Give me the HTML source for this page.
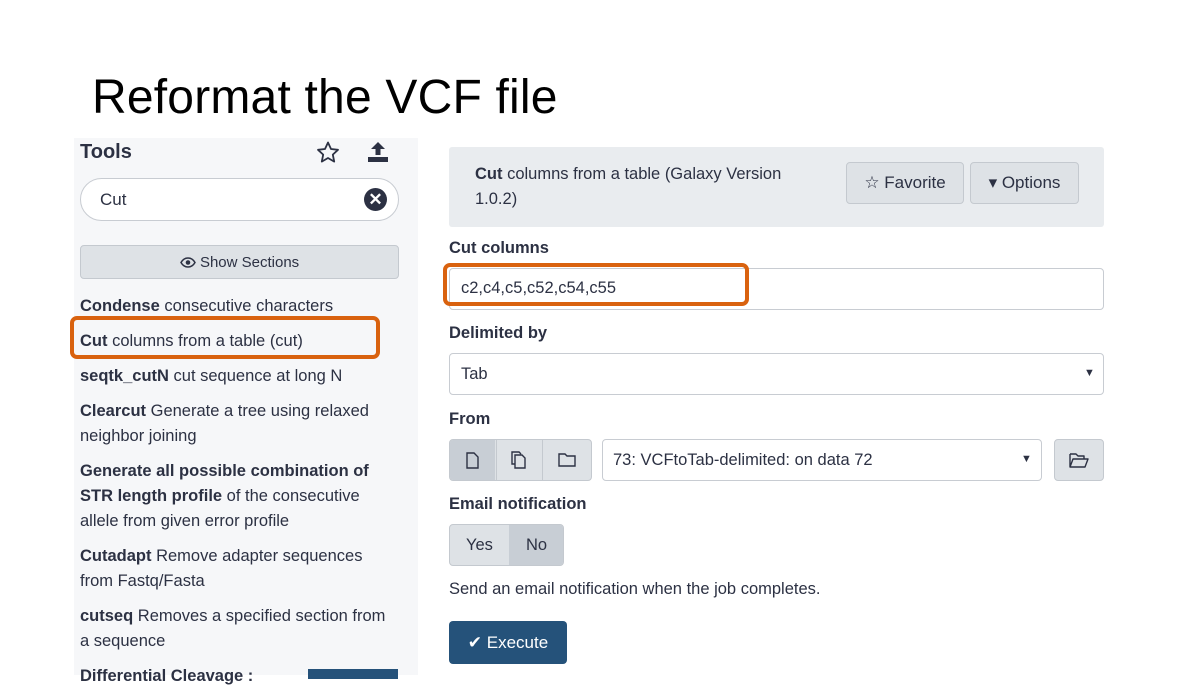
<!DOCTYPE html>
<html><head><meta charset="utf-8"><style>
*{box-sizing:border-box;margin:0;padding:0}
body{width:1200px;height:675px;background:#fff;position:relative;overflow:hidden;font-family:"Liberation Sans",sans-serif;color:#2c3143}
.a{position:absolute}
.t{font-size:16px;line-height:25px}
b{font-weight:bold}
.btn{position:absolute;background:#dee2e6;border:1px solid #c4c9cf;border-radius:4px}
.inp{position:absolute;background:#fff;border:1px solid #c8ccd2;border-radius:4px}
</style></head><body>
<div class="a" style="left:92px;top:70px;font-size:48px;color:#000;letter-spacing:0.2px">Reformat the VCF file</div>
<div class="a" style="left:74px;top:138px;width:344px;height:537px;background:#f6f7f9"></div>
<div class="a" style="left:80px;top:141px;font-size:20px;font-weight:bold">Tools</div>
<svg class="a" style="left:316px;top:141px" width="24" height="22" viewBox="0 0 24 22"><path d="M12 1.5l3 6.5 7 .8-5.2 4.8 1.4 7L12 17l-6.2 3.6 1.4-7L2 8.8l7-.8z" fill="none" stroke="#2c3143" stroke-width="1.8" stroke-linejoin="round"/></svg>
<svg class="a" style="left:367px;top:140px" width="22" height="24" viewBox="0 0 22 24"><path d="M11 2l7 7h-4.5v6h-5V9H4z" fill="#2c3143"/><rect x="1" y="17" width="20" height="5" fill="#2c3143"/></svg>
<div class="inp" style="left:80px;top:178px;width:319px;height:43px;border-radius:22px"></div>
<div class="a t" style="left:100px;top:187px;font-size:17px">Cut</div>
<div class="a" style="left:364px;top:188px;width:23px;height:23px;border-radius:50%;background:#2c3143;color:#fff;font-size:17px;font-weight:bold;text-align:center;line-height:23px">✕</div>
<div class="btn" style="left:80px;top:245px;width:319px;height:34px;text-align:center;font-size:15px;line-height:33px">
<svg width="16" height="11" viewBox="0 0 16 11" style="vertical-align:-1px"><path d="M1 5.5C3 2 5.5 1 8 1s5 1 7 4.5C13 9 10.5 10 8 10S3 9 1 5.5z" fill="none" stroke="#2c3143" stroke-width="1.5"/><circle cx="8" cy="5.5" r="2.3" fill="#2c3143"/></svg> Show Sections</div>
<div class="a t" style="left:80px;top:294px;width:310px;font-size:16.5px">
<div style="margin-bottom:10px"><b>Condense</b> consecutive characters</div>
<div style="margin-bottom:10px"><b>Cut</b> columns from a table (cut)</div>
<div style="margin-bottom:10px"><b>seqtk_cutN</b> cut sequence at long N</div>
<div style="margin-bottom:10px"><b>Clearcut</b> Generate a tree using relaxed neighbor joining</div>
<div style="margin-bottom:10px"><b>Generate all possible combination of STR length profile</b> of the consecutive allele from given error profile</div>
<div style="margin-bottom:10px"><b>Cutadapt</b> Remove adapter sequences from Fastq/Fasta</div>
<div style="margin-bottom:10px"><b>cutseq</b> Removes a specified section from a sequence</div>
<div><b>Differential Cleavage :</b></div>
</div>
<div class="a" style="left:308px;top:669px;width:90px;height:10px;background:#25527a"></div>
<div class="a" style="left:70px;top:316px;width:310px;height:43px;border:4px solid #d9620f;border-radius:7px"></div>

<div class="a" style="left:449px;top:147px;width:655px;height:80px;background:#e9ecef;border-radius:3px"></div>
<div class="a t" style="left:475px;top:162px;width:335px;font-size:16.5px"><b>Cut</b> columns from a table (Galaxy Version 1.0.2)</div>
<div class="btn" style="left:846px;top:162px;width:118px;height:42px;text-align:center;line-height:40px;font-size:17px">☆ Favorite</div>
<div class="btn" style="left:970px;top:162px;width:109px;height:42px;text-align:center;line-height:40px;font-size:17px">▾ Options</div>
<div class="a t" style="left:449px;top:236px;font-weight:bold;font-size:16.5px">Cut columns</div>
<div class="inp" style="left:449px;top:268px;width:655px;height:42px"></div>
<div class="a t" style="left:461px;top:276px;font-size:16.5px">c2,c4,c5,c52,c54,c55</div>
<div class="a" style="left:443px;top:263px;width:306px;height:43px;border:4px solid #d9620f;border-radius:7px"></div>
<div class="a t" style="left:449px;top:321px;font-weight:bold;font-size:16.5px">Delimited by</div>
<div class="inp" style="left:449px;top:353px;width:655px;height:42px"></div>
<div class="a t" style="left:461px;top:362px;font-size:16.5px">Tab</div>
<div class="a" style="left:1084px;top:367px;font-size:11px">▼</div>
<div class="a t" style="left:449px;top:407px;font-weight:bold;font-size:16.5px">From</div>
<div class="btn" style="left:449px;top:439px;width:143px;height:42px;overflow:hidden">
<div class="a" style="left:0;top:0;width:45px;height:42px;background:#c8ced5"></div>
<div class="a" style="left:46px;top:0;width:1px;height:42px;background:#c4c9cf"></div>
<div class="a" style="left:92px;top:0;width:1px;height:42px;background:#c4c9cf"></div>
<svg class="a" style="left:16px;top:12px" width="13" height="17" viewBox="0 0 13 17"><path d="M1 1h7l4 4v11H1z" fill="none" stroke="#2c3143" stroke-width="1.4"/></svg>
<svg class="a" style="left:61px;top:11px" width="15" height="18" viewBox="0 0 15 18"><path d="M4 4h7l3 3v10H4zM4 13H1V1h7l2 2" fill="none" stroke="#2c3143" stroke-width="1.4"/></svg>
<svg class="a" style="left:108px;top:13px" width="18" height="14" viewBox="0 0 18 14"><path d="M1 1h6l2 2h8v10H1z" fill="none" stroke="#2c3143" stroke-width="1.4"/></svg>
</div>
<div class="inp" style="left:602px;top:439px;width:440px;height:42px"></div>
<div class="a t" style="left:613px;top:448px;font-size:16.5px">73: VCFtoTab-delimited: on data 72</div>
<div class="a" style="left:1021px;top:453px;font-size:11px">▼</div>
<div class="btn" style="left:1054px;top:439px;width:50px;height:42px"></div>
<svg class="a" style="left:1069px;top:453px" width="20" height="15" viewBox="0 0 20 15"><path d="M1 1h6l2 2h6v3M1 14V1M1 14l3-8h15l-3 8z" fill="none" stroke="#2c3143" stroke-width="1.4" stroke-linejoin="round"/></svg>
<div class="a t" style="left:449px;top:492px;font-weight:bold;font-size:16.5px">Email notification</div>
<div class="btn" style="left:449px;top:524px;width:115px;height:42px;overflow:hidden">
<div class="a" style="left:59px;top:0;width:56px;height:42px;background:#c8ced5"></div>
<div class="a t" style="left:16px;top:8px;font-size:16.5px">Yes</div><div class="a t" style="left:76px;top:8px;font-size:16.5px">No</div></div>
<div class="a t" style="left:449px;top:577px;font-size:16.5px">Send an email notification when the job completes.</div>
<div class="a" style="left:449px;top:621px;width:118px;height:43px;background:#25527a;border-radius:4px;color:#fff;font-size:17px;line-height:43px;text-align:center">✔ Execute</div>
</body></html>
